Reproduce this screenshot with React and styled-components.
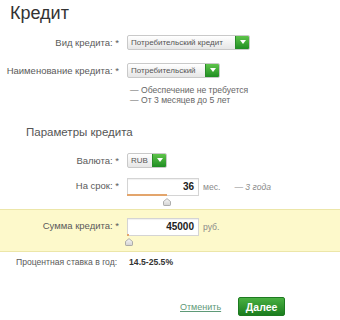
import React from "react";
import styled, { createGlobalStyle } from "styled-components";

const GlobalStyle = createGlobalStyle`
  body {
    margin: 0;
    background: #ffffff;
    font-family: "Liberation Sans", Arial, sans-serif;
    color: #555555;
  }
`;

const Page = styled.div`
  width: 340px;
  height: 320px;
  overflow: hidden;
  background: #ffffff;
`;

const Title = styled.h1`
  margin: 0;
  padding: 4px 0 0 10px;
  height: 27px;
  box-sizing: border-box;
  font-size: 18px;
  font-weight: normal;
  color: #333333;
  line-height: 19px;
`;

const Row = styled.div`
  display: grid;
  grid-template-columns: 119px auto;
  column-gap: 8px;
  align-items: ${(p) => (p.$top ? "start" : "center")};
  height: ${(p) => p.$h}px;
  padding-top: ${(p) => p.$pt || 0}px;
  box-sizing: border-box;
`;

const Label = styled.div`
  text-align: right;
  font-size: 9.5px;
  color: #5a5a5a;
  white-space: nowrap;
  padding-top: ${(p) => p.$pt || 0}px;
`;

const SelectBox = styled.div`
  display: flex;
  width: ${(p) => p.$w}px;
  height: 15px;
  box-sizing: border-box;
  border: 1px solid #c9c9c9;
  border-radius: 2px;
  background: linear-gradient(#ffffff, #e6e6e6);
  overflow: hidden;
`;

const SelectText = styled.span`
  flex: 1;
  padding-left: 3px;
  font-size: 8px;
  line-height: 13px;
  color: #555555;
  white-space: nowrap;
  overflow: hidden;
`;

const SelectArrow = styled.span`
  width: 13px;
  display: flex;
  align-items: center;
  justify-content: center;
  background: linear-gradient(#5ec44a, #1f8d22);
  border-left: 1px solid #2a8a2a;
`;

const Notes = styled.div`
  padding: 2px 0 0 130px;
  font-size: 8.6px;
  line-height: 10px;
  color: #666666;
  height: 23px;
  box-sizing: border-box;
`;

const Heading = styled.h2`
  margin: 0;
  padding: 20px 0 0 26px;
  height: 42px;
  box-sizing: border-box;
  font-size: 11.5px;
  line-height: 13px;
  font-weight: normal;
  color: #555555;
`;

const Field = styled.div`
  display: flex;
  align-items: center;
  gap: 4px;
`;

const NumberBox = styled.div`
  width: 72px;
  height: 18px;
  box-sizing: border-box;
  border: 1px solid #d4d4d4;
  box-shadow: inset 0 1px 1px rgba(0, 0, 0, 0.06);
  background: #ffffff;
  text-align: right;
  padding-right: 4px;
  font-size: 10px;
  font-weight: bold;
  line-height: 16px;
  color: #222222;
`;

const Unit = styled.span`
  font-size: 8.6px;
  color: #8a8a8a;
`;

const Hint = styled.span`
  margin-left: 10px;
  font-size: 8.6px;
  font-style: italic;
  color: #8a8a8a;
`;

const Track = styled.div`
  position: relative;
  width: 72px;
  height: 10px;
`;

const Fill = styled.div`
  position: absolute;
  left: 0;
  top: -2px;
  height: 2px;
  background: #e3a56c;
`;

const Thumb = styled.svg`
  position: absolute;
  top: 2px;
  width: 8px;
  height: 8px;
`;

const Band = styled.div`
  background: #fdf9cb;
  border-top: 1px solid #ece6a8;
  border-bottom: 1px solid #ece6a8;
  height: 43px;
  box-sizing: border-box;
  padding-top: 8px;
`;

const RateRow = styled.div`
  display: flex;
  align-items: center;
  height: 20px;
  padding-left: 16px;
  font-size: 8.6px;
  color: #5a5a5a;
`;

const RateValue = styled.span`
  margin-left: 12px;
  font-weight: bold;
  color: #333333;
`;

const Actions = styled.div`
  display: flex;
  align-items: center;
  padding: 25px 0 0 180px;
  gap: 17px;
`;

const CancelLink = styled.a`
  font-size: 9px;
  color: #5f9a78;
  text-decoration: underline;
  cursor: pointer;
`;

const NextButton = styled.button`
  width: 47px;
  height: 19px;
  border: 1px solid #1d7a20;
  border-radius: 2px;
  background: linear-gradient(#49b041, #1b7d1e);
  color: #ffffff;
  font-family: "Liberation Sans", Arial, sans-serif;
  font-size: 10.5px;
  font-weight: bold;
  padding: 0;
  cursor: pointer;
`;

const Select = ({ width, value }) => (
  <SelectBox $w={width}>
    <SelectText>{value}</SelectText>
    <SelectArrow>
      <svg width="6" height="4" viewBox="0 0 6 4">
        <path d="M0 0 L6 0 L3 4 Z" fill="#ffffff" />
      </svg>
    </SelectArrow>
  </SelectBox>
);

const Slider = ({ ratio }) => (
  <Track>
    {ratio > 0 && <Fill style={{ width: ratio * 72 + "px" }} />}
    <Thumb viewBox="0 0 8 8" style={{ left: ratio * 72 - 4 + "px" }}>
      <defs>
        <linearGradient id="th" x1="0" y1="0" x2="0" y2="1">
          <stop offset="0" stopColor="#f8f8f8" />
          <stop offset="1" stopColor="#d2d2d2" />
        </linearGradient>
      </defs>
      <path
        d="M0.5 3.5 L4 0.6 L7.5 3.5 L7.5 6.8 Q7.5 7.5 6.8 7.5 L1.2 7.5 Q0.5 7.5 0.5 6.8 Z"
        fill="url(#th)"
        stroke="#9c9c9c"
        strokeWidth="0.8"
      />
    </Thumb>
  </Track>
);

const App = () => {
  return (
    <Page>
      <GlobalStyle />
      <Title>Кредит</Title>
      <Row $h={30}>
        <Label>Вид кредита: *</Label>
        <Select width={123} value="Потребительский кредит" />
      </Row>
      <Row $h={26}>
        <Label>Наименование кредита: *</Label>
        <Select width={93} value="Потребительский" />
      </Row>
      <Notes>
        <div>— Обеспечение не требуется</div>
        <div>— От 3 месяцев до 5 лет</div>
      </Notes>
      <Heading>Параметры кредита</Heading>
      <Row $h={24}>
        <Label>Валюта: *</Label>
        <Select width={40} value="RUB" />
      </Row>
      <Row $h={37} $top $pt={6}>
        <Label $pt={2}>На срок: *</Label>
        <div>
          <Field>
            <NumberBox>36</NumberBox>
            <Unit>мес.</Unit>
            <Hint>— 3 года</Hint>
          </Field>
          <Slider ratio={0.56} />
        </div>
      </Row>
      <Band>
        <Row $h={34} $top>
          <Label $pt={2}>Сумма кредита: *</Label>
          <div>
            <Field>
              <NumberBox>45000</NumberBox>
              <Unit>руб.</Unit>
            </Field>
            <Slider ratio={0.03} />
          </div>
        </Row>
      </Band>
      <RateRow>
        Процентная ставка в год:
        <RateValue>14.5-25.5%</RateValue>
      </RateRow>
      <Actions>
        <CancelLink>Отменить</CancelLink>
        <NextButton>Далее</NextButton>
      </Actions>
    </Page>
  );
};

export default App;
